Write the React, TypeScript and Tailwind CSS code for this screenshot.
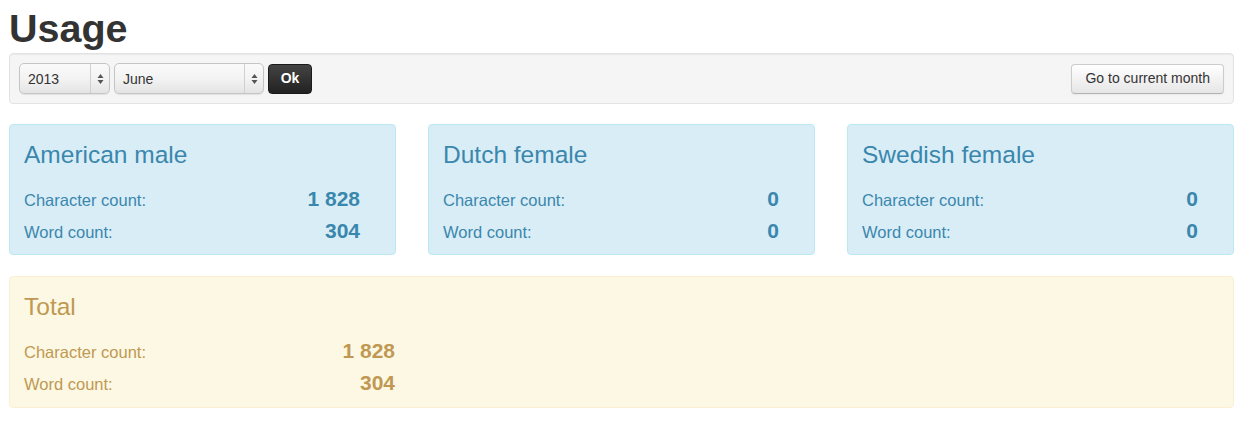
import React from 'react';

interface Voice {
  name: string;
  chars: string;
  words: string;
}

const voices: Voice[] = [
  { name: 'American male', chars: '1 828', words: '304' },
  { name: 'Dutch female', chars: '0', words: '0' },
  { name: 'Swedish female', chars: '0', words: '0' },
];

const font = { fontFamily: '"Liberation Sans", Arial, sans-serif' };

const Arrows = () => (
  <svg width="7" height="12" viewBox="0 0 7 12" className="text-[#555]">
    <path d="M3.5 1 L6.5 5 L0.5 5 Z" fill="currentColor" />
    <path d="M3.5 11 L6.5 7 L0.5 7 Z" fill="currentColor" />
  </svg>
);

const FakeSelect = ({ value, width }: { value: string; width: string }) => (
  <div
    className={`${width} h-[31px] flex items-stretch rounded-[5px] border border-[#c5c5c5] bg-gradient-to-b from-[#fafafa] via-[#f3f3f3] to-[#e4e4e4] shadow-[0_1px_1px_rgba(0,0,0,0.08)]`}
  >
    <div className="flex-1 flex items-center pl-[8px] pt-[1px] text-[14px] text-[#333]">{value}</div>
    <div className="w-[19px] border-l border-[#d0d0d0] flex items-center justify-center">
      <Arrows />
    </div>
  </div>
);

const StatRows = ({
  chars,
  words,
  width,
  labelColor,
}: {
  chars: string;
  words: string;
  width: string;
  labelColor: string;
}) => (
  <div className={width}>
    {[
      ['Character count:', chars],
      ['Word count:', words],
    ].map(([label, value]) => (
      <div key={label} className="flex items-baseline justify-between h-[32px] leading-[32px]">
        <span className={`text-[16.5px] ${labelColor}`}>{label}</span>
        <span className="text-[21px] font-bold">{value}</span>
      </div>
    ))}
  </div>
);

export default function App() {
  return (
    <div className="bg-white min-h-[425px] pl-[9px] pr-[11px] text-[#333]" style={font}>
      <h1 className="pt-[8px] text-[39.5px] leading-[40px] font-bold text-[#333] mb-[5px]">Usage</h1>

      {/* month picker */}
      <div className="flex items-center justify-between h-[51px] px-[9px] rounded-[4px] border border-[#e3e3e3] bg-[#f5f5f5] shadow-[inset_0_1px_1px_rgba(0,0,0,0.05)]">
        <div className="flex items-center gap-[4px]">
          <FakeSelect value="2013" width="w-[91px]" />
          <FakeSelect value="June" width="w-[150px]" />
          <button className="h-[30px] w-[44px] rounded-[4px] border border-[#1a1a1a] bg-gradient-to-b from-[#444] to-[#222] text-white text-[14px] font-bold">
            Ok
          </button>
        </div>
        <button className="h-[30px] px-[13px] rounded-[4px] border border-[#ccc] border-b-[#b3b3b3] bg-gradient-to-b from-white to-[#e6e6e6] text-[14px] text-[#333] shadow-[inset_0_1px_0_rgba(255,255,255,0.2),0_1px_2px_rgba(0,0,0,0.05)]">
          Go to current month
        </button>
      </div>

      {/* voices */}
      <div className="grid grid-cols-3 gap-[32px] mt-[20px]">
        {voices.map((v) => (
          <div
            key={v.name}
            className="h-[131px] rounded-[4px] border border-[#bce8f1] bg-[#d9edf7] text-[#3a87ad] pt-[15px] px-[14px]"
          >
            <h3 className="text-[24.5px] leading-[30px] font-normal">{v.name}</h3>
            <div className="mt-[13px]">
              <StatRows chars={v.chars} words={v.words} width="w-[336px]" labelColor="text-[#3a87ad]" />
            </div>
          </div>
        ))}
      </div>

      {/* total */}
      <div className="mt-[21px] h-[132px] rounded-[4px] border border-[#fbeed5] bg-[#fcf8e3] text-[#c09853] pt-[15px] px-[14px]">
        <h3 className="text-[24.5px] leading-[30px] font-normal">Total</h3>
        <div className="mt-[13px]">
          <StatRows chars="1 828" words="304" width="w-[371px]" labelColor="text-[#c09853]" />
        </div>
      </div>
    </div>
  );
}
